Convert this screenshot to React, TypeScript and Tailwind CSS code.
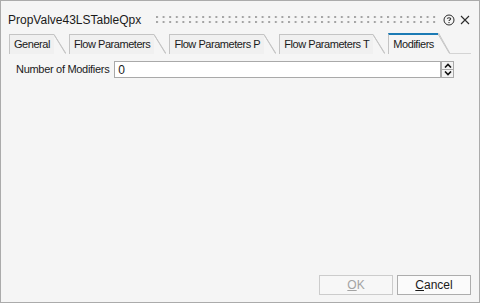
import React from "react";

const FONT = { fontFamily: '"Liberation Sans", Arial, sans-serif' };

function Tab({ label, active = false }: { label: string; active?: boolean }) {
  return (
    <div className={`flex items-end ${active ? "h-[21px]" : "h-[20px]"}`}>
      <div
        className={`flex items-center h-full pl-[4px] pr-[4px] border-l border-t ${
          active ? "border-l-[#c4c4c4] border-t-2 border-t-[#1c7bb5] bg-[#f5f5f5]" : "border-[#c4c4c4] bg-[#f0f0f0]"
        } text-[11px] tracking-[-0.45px] text-[#1a1a1a]`}
      >
        {label}
      </div>
      <svg width="12" height={active ? 21 : 20} className="block shrink-0">
        <path d={active ? "M0 0 H0.5 L12 20.5" : "M0 0.5 L12 19.5"} stroke="#c8c8c8" strokeWidth="1" fill={active ? "#f5f5f5" : "#f0f0f0"} />
        <path d={active ? "M0 1 L11.5 20.5" : "M0 0.5 L11.5 19.5"} stroke="#c4c4c4" strokeWidth="1" fill="none" />
      </svg>
    </div>
  );
}

export default function App() {
  return (
    <div
      className="w-[480px] h-[303px] border border-[#ababab] bg-[#f5f5f5] flex flex-col overflow-hidden"
      style={FONT}
    >
      {/* Title bar */}
      <div className="flex items-center h-[22px] mt-[8px] pl-[7px] pr-[9px]">
        <span className="text-[12px] text-[#1a1a1a] whitespace-nowrap">PropValve43LSTableQpx</span>
        <div className="flex-1 ml-[15px] mr-[7px] h-[8px]">
          <svg width="100%" height="8" className="block">
            <defs>
              <pattern id="dots" x="0" y="0" width="6.6" height="8" patternUnits="userSpaceOnUse">
                <rect x="0" y="0" width="2" height="2" fill="#a4a4a4" />
                <rect x="0" y="5" width="2" height="2" fill="#a4a4a4" />
              </pattern>
            </defs>
            <rect x="0" y="0" width="100%" height="8" fill="url(#dots)" />
          </svg>
        </div>
        <svg width="12" height="12" viewBox="0 0 12 12" className="block shrink-0">
          <circle cx="6" cy="6" r="5" fill="none" stroke="#2b2b2b" strokeWidth="1" />
          <path d="M4.3 4.8 C4.3 3.3 7.7 3.3 7.7 4.8 C7.7 5.9 6 5.9 6 7.1" fill="none" stroke="#2b2b2b" strokeWidth="1.1" />
          <rect x="5.45" y="8" width="1.1" height="1.1" fill="#2b2b2b" />
        </svg>
        <svg width="10" height="10" viewBox="0 0 10 10" className="block shrink-0 ml-[5px]">
          <path d="M1 1 L9 9 M9 1 L1 9" stroke="#2b2b2b" strokeWidth="1.1" />
        </svg>
      </div>

      {/* Tabs */}
      <div className="flex items-end mt-[2px] pl-[8px] h-[21px]">
        <div className="flex items-end gap-[3px]">
          <Tab label="General" />
          <Tab label="Flow Parameters" />
          <Tab label="Flow Parameters P" />
          <Tab label="Flow Parameters T" />
          <Tab label="Modifiers" active />
        </div>
        <div className="w-[21px] h-[1px] bg-[#d4d4d4] mb-0" />
      </div>

      {/* Content */}
      <div className="flex items-center pt-[7px] pl-[15px] pr-[25px]">
        <span className="text-[11px] tracking-[-0.3px] text-[#1a1a1a] whitespace-nowrap">Number of Modifiers</span>
        <div className="flex-1 ml-[5px] h-[17px] bg-white border border-[#a9a9a9] flex items-center pl-[3px] text-[12px] text-[#1a1a1a]">
          0
        </div>
        <div className="flex flex-col w-[13px] h-[17px]">
          <div className="flex-1 border border-[#a9a9a9] bg-[#f3f3f3] flex items-center justify-center">
            <svg width="8" height="5" viewBox="0 0 8 5" className="block">
              <path d="M1 4.5 L4 1.5 L7 4.5" fill="none" stroke="#111" strokeWidth="1.6" />
            </svg>
          </div>
          <div className="flex-1 border border-t-0 border-[#a9a9a9] bg-[#f3f3f3] flex items-center justify-center">
            <svg width="8" height="5" viewBox="0 0 8 5" className="block">
              <path d="M1 0.5 L4 3.5 L7 0.5" fill="none" stroke="#111" strokeWidth="1.6" />
            </svg>
          </div>
        </div>
      </div>

      {/* Buttons */}
      <div className="mt-auto flex justify-end gap-[4px] pr-[8px] pb-[7px]">
        <button className="w-[74px] h-[20px] border border-[#cccccc] bg-[#f7f7f7] text-[12px] text-[#a3a3a3] flex items-center justify-center">
          <span><span className="underline">O</span>K</span>
        </button>
        <button className="w-[74px] h-[20px] border border-[#adadad] bg-[#fbfbfb] text-[12px] text-[#1a1a1a] flex items-center justify-center">
          <span><span className="underline">C</span>ancel</span>
        </button>
      </div>
    </div>
  );
}
